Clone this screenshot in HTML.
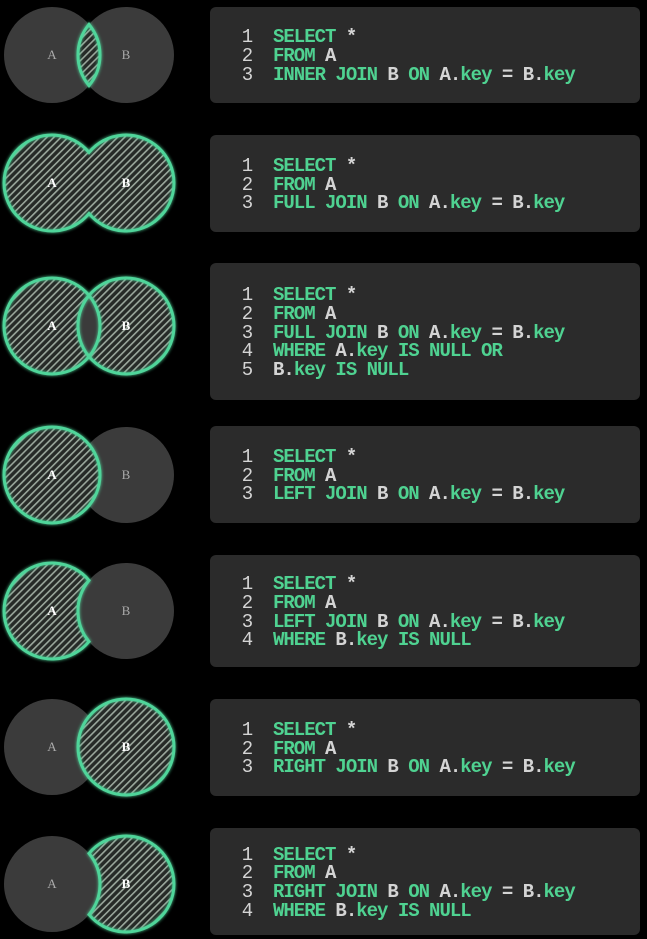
<!DOCTYPE html>
<html><head><meta charset="utf-8"><style>
html,body{margin:0;padding:0;background:#000;width:647px;height:939px;overflow:hidden;position:relative}
.box{position:absolute;left:210px;width:430px;background:#2b2b2b;border-radius:6px;display:flex;flex-direction:column;justify-content:center;box-sizing:border-box;padding-top:3px}
.l{font-family:"Liberation Mono",monospace;font-size:19px;line-height:18.7px;color:#d4d4d4;white-space:pre;font-weight:bold;letter-spacing:-1px}
.n{display:inline-block;width:63px;text-align:right;font-weight:normal}
.g{color:#4fd291}
svg{position:absolute;left:0;top:0}
</style></head><body>
<svg width="210" height="939" viewBox="0 0 210 939">
<defs>
<pattern id="h" patternUnits="userSpaceOnUse" width="5" height="5" patternTransform="rotate(45)">
<rect width="5" height="5" fill="#262a27"/><rect x="0" y="0" width="1.6" height="5" fill="#9aa79c"/>
</pattern>
<filter id="gl" x="-20%" y="-20%" width="140%" height="140%"><feGaussianBlur stdDeviation="1.5" result="b"/><feMerge><feMergeNode in="b"/><feMergeNode in="SourceGraphic"/></feMerge></filter>
</defs>
<style>
.gr{fill:#3b3b3b}.ht{fill:url(#h)}.st{fill:none;stroke:#4fd59a;stroke-width:3;filter:url(#gl)}
.la{font-family:"Liberation Serif",serif;font-size:13px;fill:#aaa;text-anchor:middle}
.lw{font-family:"Liberation Serif",serif;font-size:13px;fill:#fff;font-weight:bold;text-anchor:middle}
</style>
<g transform="translate(0,55)">
<circle class="gr" cx="52" cy="0" r="48"/><circle class="gr" cx="126" cy="0" r="48"/>
<path class="ht" d="M89,-30.6 A48,48 0 0 1 89,30.6 A48,48 0 0 1 89,-30.6Z"/>
<path class="st" d="M89,-30.6 A48,48 0 0 1 89,30.6 A48,48 0 0 1 89,-30.6Z"/>
<text class="la" x="52" y="4">A</text><text class="la" x="126" y="4">B</text>
</g>
<g transform="translate(0,183)">
<path class="ht" d="M89,-30.6 A48,48 0 1 0 89,30.6 A48,48 0 1 0 89,-30.6Z"/>
<path class="st" d="M89,-30.6 A48,48 0 1 0 89,30.6 A48,48 0 1 0 89,-30.6Z"/>
<text class="lw" x="52" y="4">A</text><text class="lw" x="126" y="4">B</text>
</g>
<g transform="translate(0,326)">
<circle class="ht" cx="52" cy="0" r="48"/><circle class="ht" cx="126" cy="0" r="48"/>
<path class="gr" d="M89,-30.6 A48,48 0 0 1 89,30.6 A48,48 0 0 1 89,-30.6Z"/>
<circle class="st" cx="52" cy="0" r="48"/><circle class="st" cx="126" cy="0" r="48"/>
<text class="lw" x="52" y="4">A</text><text class="lw" x="126" y="4">B</text>
</g>
<g transform="translate(0,475)">
<circle class="gr" cx="126" cy="0" r="48"/>
<circle class="ht" cx="52" cy="0" r="48"/><circle class="st" cx="52" cy="0" r="48"/>
<text class="lw" x="52" y="4">A</text><text class="la" x="126" y="4">B</text>
</g>
<g transform="translate(0,611)">
<circle class="gr" cx="126" cy="0" r="48"/>
<path class="ht" d="M89,-30.6 A48,48 0 1 0 89,30.6 A48,48 0 0 1 89,-30.6Z"/>
<path class="st" d="M89,-30.6 A48,48 0 1 0 89,30.6 A48,48 0 0 1 89,-30.6Z"/>
<text class="lw" x="52" y="4">A</text><text class="la" x="126" y="4">B</text>
</g>
<g transform="translate(0,747)">
<circle class="gr" cx="52" cy="0" r="48"/>
<circle class="ht" cx="126" cy="0" r="48"/><circle class="st" cx="126" cy="0" r="48"/>
<text class="la" x="52" y="4">A</text><text class="lw" x="126" y="4">B</text>
</g>
<g transform="translate(0,884)">
<circle class="gr" cx="52" cy="0" r="48"/>
<path class="ht" d="M89,-30.6 A48,48 0 1 1 89,30.6 A48,48 0 0 0 89,-30.6Z"/>
<path class="st" d="M89,-30.6 A48,48 0 1 1 89,30.6 A48,48 0 0 0 89,-30.6Z"/>
<text class="la" x="52" y="4">A</text><text class="lw" x="126" y="4">B</text>
</g>
</svg>

<div class="box" style="top:7px;height:96px">
<div class="l"><span class="n">1  </span><span class="g">SELECT</span> *</div>
<div class="l"><span class="n">2  </span><span class="g">FROM</span> A</div>
<div class="l"><span class="n">3  </span><span class="g">INNER JOIN</span> B <span class="g">ON</span> A.<span class="g">key</span> = B.<span class="g">key</span></div>
</div>
<div class="box" style="top:135px;height:97px">
<div class="l"><span class="n">1  </span><span class="g">SELECT</span> *</div>
<div class="l"><span class="n">2  </span><span class="g">FROM</span> A</div>
<div class="l"><span class="n">3  </span><span class="g">FULL JOIN</span> B <span class="g">ON</span> A.<span class="g">key</span> = B.<span class="g">key</span></div>
</div>
<div class="box" style="top:263px;height:137px">
<div class="l"><span class="n">1  </span><span class="g">SELECT</span> *</div>
<div class="l"><span class="n">2  </span><span class="g">FROM</span> A</div>
<div class="l"><span class="n">3  </span><span class="g">FULL JOIN</span> B <span class="g">ON</span> A.<span class="g">key</span> = B.<span class="g">key</span></div>
<div class="l"><span class="n">4  </span><span class="g">WHERE</span> A.<span class="g">key IS NULL OR</span></div>
<div class="l"><span class="n">5  </span>B.<span class="g">key IS NULL</span></div>
</div>
<div class="box" style="top:426px;height:97px">
<div class="l"><span class="n">1  </span><span class="g">SELECT</span> *</div>
<div class="l"><span class="n">2  </span><span class="g">FROM</span> A</div>
<div class="l"><span class="n">3  </span><span class="g">LEFT JOIN</span> B <span class="g">ON</span> A.<span class="g">key</span> = B.<span class="g">key</span></div>
</div>
<div class="box" style="top:555px;height:112px">
<div class="l"><span class="n">1  </span><span class="g">SELECT</span> *</div>
<div class="l"><span class="n">2  </span><span class="g">FROM</span> A</div>
<div class="l"><span class="n">3  </span><span class="g">LEFT JOIN</span> B <span class="g">ON</span> A.<span class="g">key</span> = B.<span class="g">key</span></div>
<div class="l"><span class="n">4  </span><span class="g">WHERE</span> B.<span class="g">key IS NULL</span></div>
</div>
<div class="box" style="top:699px;height:97px">
<div class="l"><span class="n">1  </span><span class="g">SELECT</span> *</div>
<div class="l"><span class="n">2  </span><span class="g">FROM</span> A</div>
<div class="l"><span class="n">3  </span><span class="g">RIGHT JOIN</span> B <span class="g">ON</span> A.<span class="g">key</span> = B.<span class="g">key</span></div>
</div>
<div class="box" style="top:828px;height:107px">
<div class="l"><span class="n">1  </span><span class="g">SELECT</span> *</div>
<div class="l"><span class="n">2  </span><span class="g">FROM</span> A</div>
<div class="l"><span class="n">3  </span><span class="g">RIGHT JOIN</span> B <span class="g">ON</span> A.<span class="g">key</span> = B.<span class="g">key</span></div>
<div class="l"><span class="n">4  </span><span class="g">WHERE</span> B.<span class="g">key IS NULL</span></div>
</div>
</body></html>
